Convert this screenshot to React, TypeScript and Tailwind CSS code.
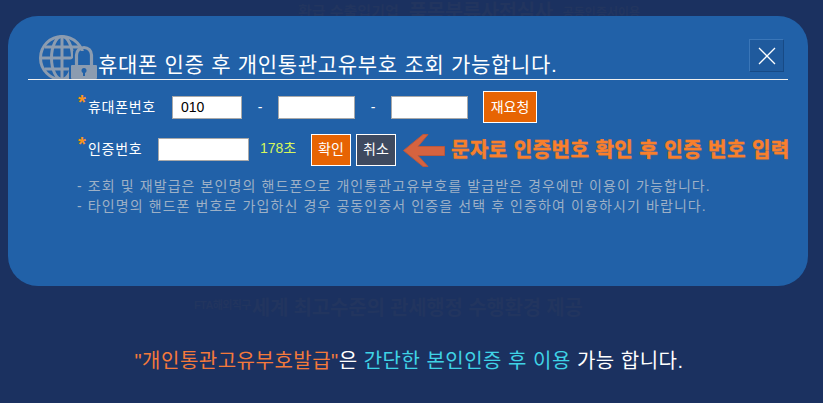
import React from "react";

const fontStack = "font-['Liberation_Sans','Noto_Sans_CJK_KR',sans-serif]";
const inputClass = "h-[23px] bg-white border border-[#a9a9a9] text-[14px] text-black pl-2 outline-none";
const orangeBtn = "bg-[#e76403] border border-white text-white text-[14px] flex items-center justify-center";

function GlobeLock() {
  return (
    <svg width="58" height="44" viewBox="0 0 58 44" className="shrink-0">
      <g fill="none" stroke="#8c9cb0" strokeWidth="3">
        <circle cx="23" cy="23" r="21.500" />
        <ellipse cx="23" cy="23" rx="10.500" ry="21.500" />
        <path d="M23 2v42M2 23h42M6 12h34M6 34h34" />
      </g>
      <path d="M30 44V26l4-3V16h20v28z" fill="#2161a8" />
      <path d="M37.500 31v-11a7.500 7.500 0 0 1 15 0v11" fill="none" stroke="#8c9cb0" strokeWidth="3.200" />
      <rect x="32" y="30" width="26" height="14" rx="1" fill="#8c9cb0" />
      <circle cx="45" cy="35.500" r="2.500" fill="#2161a8" />
      <rect x="44" y="36" width="2" height="5" fill="#2161a8" />
    </svg>
  );
}

function Arrow() {
  return (
    <svg width="43" height="33" viewBox="0 0 43 33" className="shrink-0">
      <path
        d="M0.500 16.500 L20 0.500 H25 L15 12.500 H41.500 V21.500 H15 L25 32.500 H20 Z"
        fill="#d5633f"
        stroke="#b9583e"
      />
    </svg>
  );
}

function Required({ children, width }: { children: React.ReactNode; width: string }) {
  return (
    <div className={`flex items-start shrink-0 ${width}`}>
      <span className="text-[#f7941d] text-[20px] leading-[20px] mt-[-6px] w-[10px] font-bold">*</span>
      <span className="text-white text-[14px] leading-[20px] mt-[-1px] tracking-[0.7px]">{children}</span>
    </div>
  );
}

export default function App() {
  return (
    <div className={`relative w-[823px] h-[403px] overflow-hidden bg-[#1b3160] ${fontStack}`}>
      <div className="h-[286px] relative">
        <div className="flex items-end gap-[10px] pt-[3px] text-[#22355f] font-bold ml-[298px] whitespace-nowrap">
          <span className="text-[15px] leading-[18px]">환급 수출입기업</span>
          <span className="text-[20px] leading-[18px] tracking-[-0.4px]">품목분류사전심사</span>
          <span className="text-[12px] leading-[16px]">공동인증서이용</span>
        </div>
      </div>
      <div className="flex items-end gap-[1px] pt-[10px] ml-[194px] text-[#22355f] font-bold whitespace-nowrap">
        <span className="text-[11px] leading-[14px] mb-[8px] tracking-[-0.6px]">FTA해외직구</span>
        <span className="text-[20px] leading-[24px] tracking-[-0.2px]">세계 최고수준의 관세행정 수행환경 제공</span>
      </div>
      <p className="text-center text-[20px] leading-[26px] mt-[28px] pr-[5px] text-white tracking-[0.5px]">
        <span className="text-[#f4793b]">"개인통관고유부호발급"</span>은{" "}
        <span className="text-[#3fd3e6]">간단한 본인인증 후 이용</span> 가능 합니다.
      </p>

      <div className="absolute left-[8px] top-[16px] w-[800px] h-[270px] rounded-[30px] bg-[#2161a8]">
        <div className="relative mx-[20px] h-[64px] border-b border-[#f0f0f0] flex items-end">
          <div className="ml-[11px] h-[44px] overflow-hidden self-end">
            <GlobeLock />
          </div>
          <h1 className="ml-[1px] text-white text-[21px] leading-[24px] mb-[2px] font-normal tracking-[0.7px] whitespace-nowrap">
            휴대폰 인증 후 개인통관고유부호 조회 가능합니다.
          </h1>
          <button className="absolute right-[4px] top-[23px] w-[35px] h-[33px] bg-[#1f5a9d] border border-t-[#3a76b8] border-l-[#3a76b8] border-r-[#174a86] border-b-[#174a86] text-white flex items-center justify-center">
            <svg width="18" height="18" viewBox="0 0 18 18">
              <path d="M1 1l16 16M17 1L1 17" stroke="#fff" strokeWidth="1.300" fill="none" />
            </svg>
          </button>
        </div>

        <div className="flex items-center ml-[70px] mt-[11px] h-[32px]">
          <Required width="w-[94px]">휴대폰번호</Required>
          <input className={`${inputClass} w-[70px]`} defaultValue="010" />
          <span className="w-[36px] text-center text-white text-[14px]">-</span>
          <input className={`${inputClass} w-[77px]`} />
          <span className="w-[36px] text-center text-white text-[14px]">-</span>
          <input className={`${inputClass} w-[77px]`} />
          <button className={`${orangeBtn} w-[54px] h-[32px] ml-[15px]`}>재요청</button>
        </div>

        <div className="flex items-center ml-[70px] mt-[10px] h-[33px]">
          <Required width="w-[80px]">인증번호</Required>
          <input className={`${inputClass} w-[91px]`} />
          <span className="ml-[11px] w-[51px] text-[#d6f55c] text-[14px] whitespace-nowrap mt-[-2px]">178초</span>
          <button className={`${orangeBtn} w-[40px] h-[32px]`}>확인</button>
          <button className="ml-[5px] w-[40px] h-[32px] bg-[#3e4a60] border border-white text-white text-[14px] flex items-center justify-center">
            취소
          </button>
          <div className="ml-[7px] mt-[2px]">
            <Arrow />
          </div>
          <span className="ml-[5px] text-[#f97f2c] text-[20px] leading-[24px] font-bold whitespace-nowrap tracking-[0.5px] [-webkit-text-stroke:0.5px_#f97f2c] [text-shadow:1px_1px_1px_#6a6a70]">
            문자로 인증번호 확인 후 인증 번호 입력
          </span>
        </div>

        <div className="ml-[69px] mt-[10px] text-[14px] leading-[20px] text-[#9db0c6] whitespace-nowrap tracking-[1.1px]">
          <p>- 조회 및 재발급은 본인명의 핸드폰으로 개인통관고유부호를 발급받은 경우에만 이용이 가능합니다.</p>
          <p>- 타인명의 핸드폰 번호로 가입하신 경우 공동인증서 인증을 선택 후 인증하여 이용하시기 바랍니다.</p>
        </div>
      </div>
    </div>
  );
}
